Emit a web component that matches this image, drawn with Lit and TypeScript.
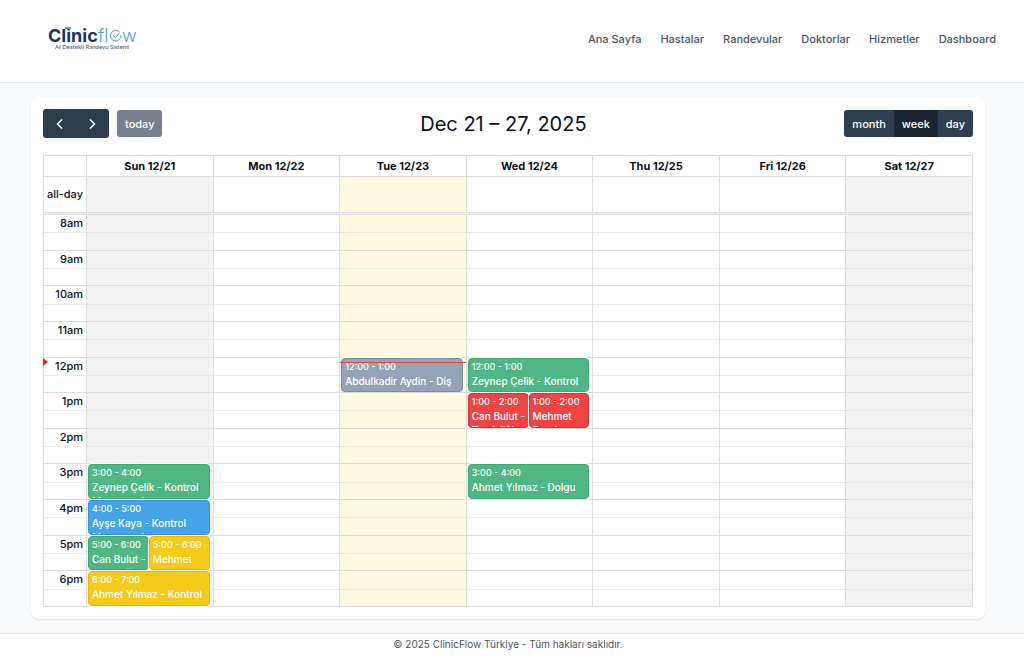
import { LitElement, html, css, svg, nothing } from "lit";
import { customElement, property, state } from "lit/decorators.js";
import { classMap } from "lit/directives/class-map.js";
import { styleMap } from "lit/directives/style-map.js";

type Tone = "slate" | "green" | "red" | "blue" | "yellow";

interface Appointment {
  day: number;
  hour: number;
  time: string;
  title: string;
  tone: Tone;
}

const DAYS = ["Sun 12/21", "Mon 12/22", "Tue 12/23", "Wed 12/24", "Thu 12/25", "Fri 12/26", "Sat 12/27"];
const HOURS = [8, 9, 10, 11, 12, 13, 14, 15, 16, 17, 18];
const TODAY = 2;
const NOW = { hour: 12, minute: 8 };

const APPOINTMENTS: Appointment[] = [
  { day: 0, hour: 15, time: "3:00 - 4:00", title: "Zeynep Çelik - Kontrol Muayenesi", tone: "green" },
  { day: 0, hour: 16, time: "4:00 - 5:00", title: "Ayşe Kaya - Kontrol Muayenesi", tone: "blue" },
  { day: 0, hour: 17, time: "5:00 - 6:00", title: "Can Bulut - Temizliği", tone: "green" },
  { day: 0, hour: 17, time: "5:00 - 6:00", title: "Mehmet Demir", tone: "yellow" },
  { day: 0, hour: 18, time: "6:00 - 7:00", title: "Ahmet Yılmaz - Kontrol", tone: "yellow" },
  { day: 2, hour: 12, time: "12:00 - 1:00", title: "Abdulkadir Aydin - Diş Taşı Temizliği", tone: "slate" },
  { day: 3, hour: 12, time: "12:00 - 1:00", title: "Zeynep Çelik - Kontrol Muayenesi", tone: "green" },
  { day: 3, hour: 13, time: "1:00 - 2:00", title: "Can Bulut - Temizliği", tone: "red" },
  { day: 3, hour: 13, time: "1:00 - 2:00", title: "Mehmet Demir", tone: "red" },
  { day: 3, hour: 15, time: "3:00 - 4:00", title: "Ahmet Yılmaz - Dolgu", tone: "green" },
];

const hourLabel = (h: number) => (h < 12 ? `${h}am` : `${h === 12 ? 12 : h - 12}pm`);

@customElement("clinic-header")
export class ClinicHeader extends LitElement {
  static styles = css`
    :host {
      display: block;
      background: #fff;
      border-bottom: 1px solid #e5e7eb;
    }
    .bar {
      display: flex;
      justify-content: space-between;
      align-items: flex-start;
      padding: 24px 28px 0 46px;
      min-height: 58px;
    }
    .logo {
      display: block;
    }
    .mark {
      display: block;
    }
    .links {
      display: flex;
      gap: 19px;
      padding-top: 7px;
    }
    .link {
      color: #4b5563;
      font-size: 11px;
      font-weight: 500;
      line-height: 17px;
      text-decoration: none;
    }
  `;

  render() {
    const links = ["Ana Sayfa", "Hastalar", "Randevular", "Doktorlar", "Hizmetler", "Dashboard"];
    return html`
      <header class="bar">
        <a class="logo" href="#" aria-label="ClinicFlow">
          ${svg`<svg class="mark" width="94" height="30" viewBox="0 0 94 30">
            <text x="2" y="18" font-family="Inter, sans-serif" font-size="18" font-weight="700" fill="#1d3557">Clinic</text>
            <rect x="19" y="3" width="6" height="2" fill="#58a6d6"/>
            <text x="52" y="18" font-family="Inter, sans-serif" font-size="18" font-weight="300" fill="#4a9fcb">fl</text>
            <path d="M73.4 7.900 A5.300 5.300 0 1 0 75 11" fill="none" stroke="#4a9fcb" stroke-width="1"/>
            <path d="M66.800 11.200 L69.300 13.500 L73.500 9" fill="none" stroke="#4a9fcb" stroke-width="1"/>
            <text x="76" y="18" font-family="Inter, sans-serif" font-size="18" font-weight="300" fill="#4a9fcb">w</text>
            <text x="9" y="25" font-family="Lato, sans-serif" font-size="6" font-weight="500" fill="#4b5b75">AI Destekli Randevu Sistemi</text>
          </svg>`}
        </a>
        <nav class="links">${links.map((l) => html`<a class="link" href="#">${l}</a>`)}</nav>
      </header>
    `;
  }
}

@customElement("week-calendar")
export class WeekCalendar extends LitElement {
  @property({ attribute: false }) appointments: Appointment[] = [];
  @state() private view = "week";

  static styles = css`
    :host {
      display: block;
      padding: 12px;
      background: #fff;
      border-radius: 8px;
      box-shadow: 0 1px 2px rgba(0, 0, 0, 0.1);
      color: #0b1020;
    }
    .toolbar {
      display: flex;
      align-items: center;
      justify-content: space-between;
      margin-bottom: 17px;
    }
    .side {
      display: flex;
      align-items: center;
      gap: 8px;
    }
    .group {
      display: flex;
      border-radius: 3px;
      overflow: hidden;
    }
    .btn {
      margin: 0;
      border: 0;
      padding: 0 8px;
      height: 27px;
      background: #2c3e50;
      color: #fff;
      font: 500 11px/16px Inter, sans-serif;
    }
    .arrow {
      display: grid;
      place-items: center;
      height: 29px;
      width: 33px;
      padding: 0;
    }
    .today-btn {
      border-radius: 3px;
      background: #76818d;
    }
    .active {
      background: #1a252f;
    }
    .title {
      margin: 0;
      font-size: 20px;
      line-height: 28px;
      font-weight: 400;
    }
    .grid {
      display: grid;
      grid-template-columns: 43px repeat(7, minmax(0, 1fr));
      grid-template-rows: 21px 36px 2px;
      grid-auto-rows: minmax(0, 1fr);
      height: 452px;
      box-sizing: border-box;
      border: solid #dedede;
      border-width: 0 1px 1px 0;
    }
    .section,
    .row {
      display: contents;
    }
    .cell {
      position: relative;
      display: flex;
      box-sizing: border-box;
      min-width: 0;
      min-height: 0;
      padding: 0;
      border: solid #dedede;
      border-width: 1px 0 0 1px;
      font-size: 11px;
      font-weight: 500;
    }
    .head {
      align-items: center;
      justify-content: center;
      font-weight: 700;
    }
    .axis {
      justify-content: flex-end;
      padding-right: 3px;
      line-height: 17px;
    }
    .middle {
      align-items: center;
    }
    .slot::before {
      content: "";
      position: absolute;
      inset: 50% 0 auto 0;
      border-top: 1px dotted #dedede;
    }
    .divider {
      grid-column: 1 / -1;
      background: #f0f0f0;
    }
    .weekend {
      background: #f2f2f2;
    }
    .today {
      background: #fef9e0;
    }
    .events {
      position: relative;
      display: flex;
      flex: 1;
      min-width: 0;
      margin: 0 3px 0 1px;
    }
    .event {
      flex: 1 1 0;
      box-sizing: border-box;
      min-width: 0;
      overflow: hidden;
      padding: 0 0 0 3px;
      border: 1px solid;
      border-radius: 4px;
      box-shadow: 0 0 0 1px #fff;
      color: #fff;
      font-size: 10px;
      font-weight: 500;
      line-height: 14px;
      text-decoration: none;
    }
    .time {
      font-size: 9px;
      line-height: 15px;
      white-space: nowrap;
    }
    .green { background: #4fb783; border-color: #43a574; }
    .blue { background: #45a3e8; border-color: #3a90d4; }
    .red { background: #ee4444; border-color: #dc2f2f; }
    .yellow { background: #f5ca18; border-color: #e6b80f; }
    .slate { background: #94a3b8; border-color: #7b8aa2; }
    .now {
      position: absolute;
      z-index: 2;
      left: 0;
      right: 0;
      height: 1px;
      background: #e0483a;
    }
    .now-arrow {
      position: absolute;
      left: -1px;
      margin-top: -4px;
      border: solid transparent;
      border-width: 4px 0 4px 5px;
      border-left-color: #f01f10;
    }
  `;

  private shade(day: number) {
    return { weekend: day === 0 || day === 6, today: day === TODAY };
  }

  private renderSlot(day: number, hour: number) {
    const items = this.appointments.filter((a) => a.day === day && a.hour === hour);
    const now = day === TODAY && hour === NOW.hour;
    return html`<td class=${classMap({ cell: true, slot: true, ...this.shade(day) })}>
      ${items.length
        ? html`<div class="events">
            ${items.map(
              (a) => html`<a class="event ${a.tone}" href="#"><div class="time">${a.time}</div><div>${a.title}</div></a>`
            )}
          </div>`
        : nothing}
      ${now ? html`<div class="now" style=${styleMap({ top: `${(NOW.minute / 60) * 100}%` })}></div>` : nothing}
    </td>`;
  }

  render() {
    return html`
      <div class="toolbar">
        <div class="side">
          <div class="group">
            <button class="btn arrow" aria-label="Previous week">
              <svg width="8" height="12" viewBox="0 0 8 12" fill="none" stroke="#fff" stroke-width="1.500"><path d="M6 1.500 L1.500 6 L6 10.500" /></svg>
            </button>
            <button class="btn arrow" aria-label="Next week">
              <svg width="8" height="12" viewBox="0 0 8 12" fill="none" stroke="#fff" stroke-width="1.500"><path d="M1 1.500 L5.500 6 L1 10.500" /></svg>
            </button>
          </div>
          <button class="btn today-btn" disabled>today</button>
        </div>
        <h2 class="title">Dec 21 – 27, 2025</h2>
        <div class="group">
          ${["month", "week", "day"].map(
            (v) => html`<button
              class=${classMap({ btn: true, active: v === this.view })}
              aria-pressed=${v === this.view}
              @click=${() => (this.view = v)}
            >${v}</button>`
          )}
        </div>
      </div>
      <table class="grid">
        <thead class="section">
          <tr class="row">
            <td class="cell"></td>
            ${DAYS.map((d) => html`<th class="cell head" scope="col">${d}</th>`)}
          </tr>
        </thead>
        <tbody class="section">
          <tr class="row">
            <th class="cell axis middle" scope="row">all-day</th>
            ${DAYS.map((_, i) => html`<td class=${classMap({ cell: true, ...this.shade(i) })}></td>`)}
          </tr>
          <tr class="row"><td class="cell divider" colspan="8"></td></tr>
          ${HOURS.map(
            (h) => html`<tr class="row">
              <th class="cell axis slot" scope="row">
                ${hourLabel(h)}
                ${h === NOW.hour
                  ? html`<div class="now-arrow" style=${styleMap({ top: `${(NOW.minute / 60) * 100}%` })}></div>`
                  : nothing}
              </th>
              ${DAYS.map((_, i) => this.renderSlot(i, h))}
            </tr>`
          )}
        </tbody>
      </table>
    `;
  }
}

@customElement("app-root")
export class AppRoot extends LitElement {
  static styles = css`
    :host {
      display: flex;
      flex-direction: column;
      min-height: 100vh;
      background: #f8fafc;
      font-family: Inter, "Noto Sans", sans-serif;
    }
    .main {
      padding: 14px 39px 14px 31px;
    }
    .footer {
      flex: 1;
      padding: 3px 8px 0 0;
      border-top: 1px solid #e5e7eb;
      background: #fff;
      color: #4b5563;
      font-size: 10px;
      line-height: 14px;
      text-align: center;
    }
  `;

  render() {
    return html`
      <clinic-header></clinic-header>
      <main class="main"><week-calendar .appointments=${APPOINTMENTS}></week-calendar></main>
      <footer class="footer">© 2025 ClinicFlow Türkiye - Tüm hakları saklıdır.</footer>
    `;
  }
}
